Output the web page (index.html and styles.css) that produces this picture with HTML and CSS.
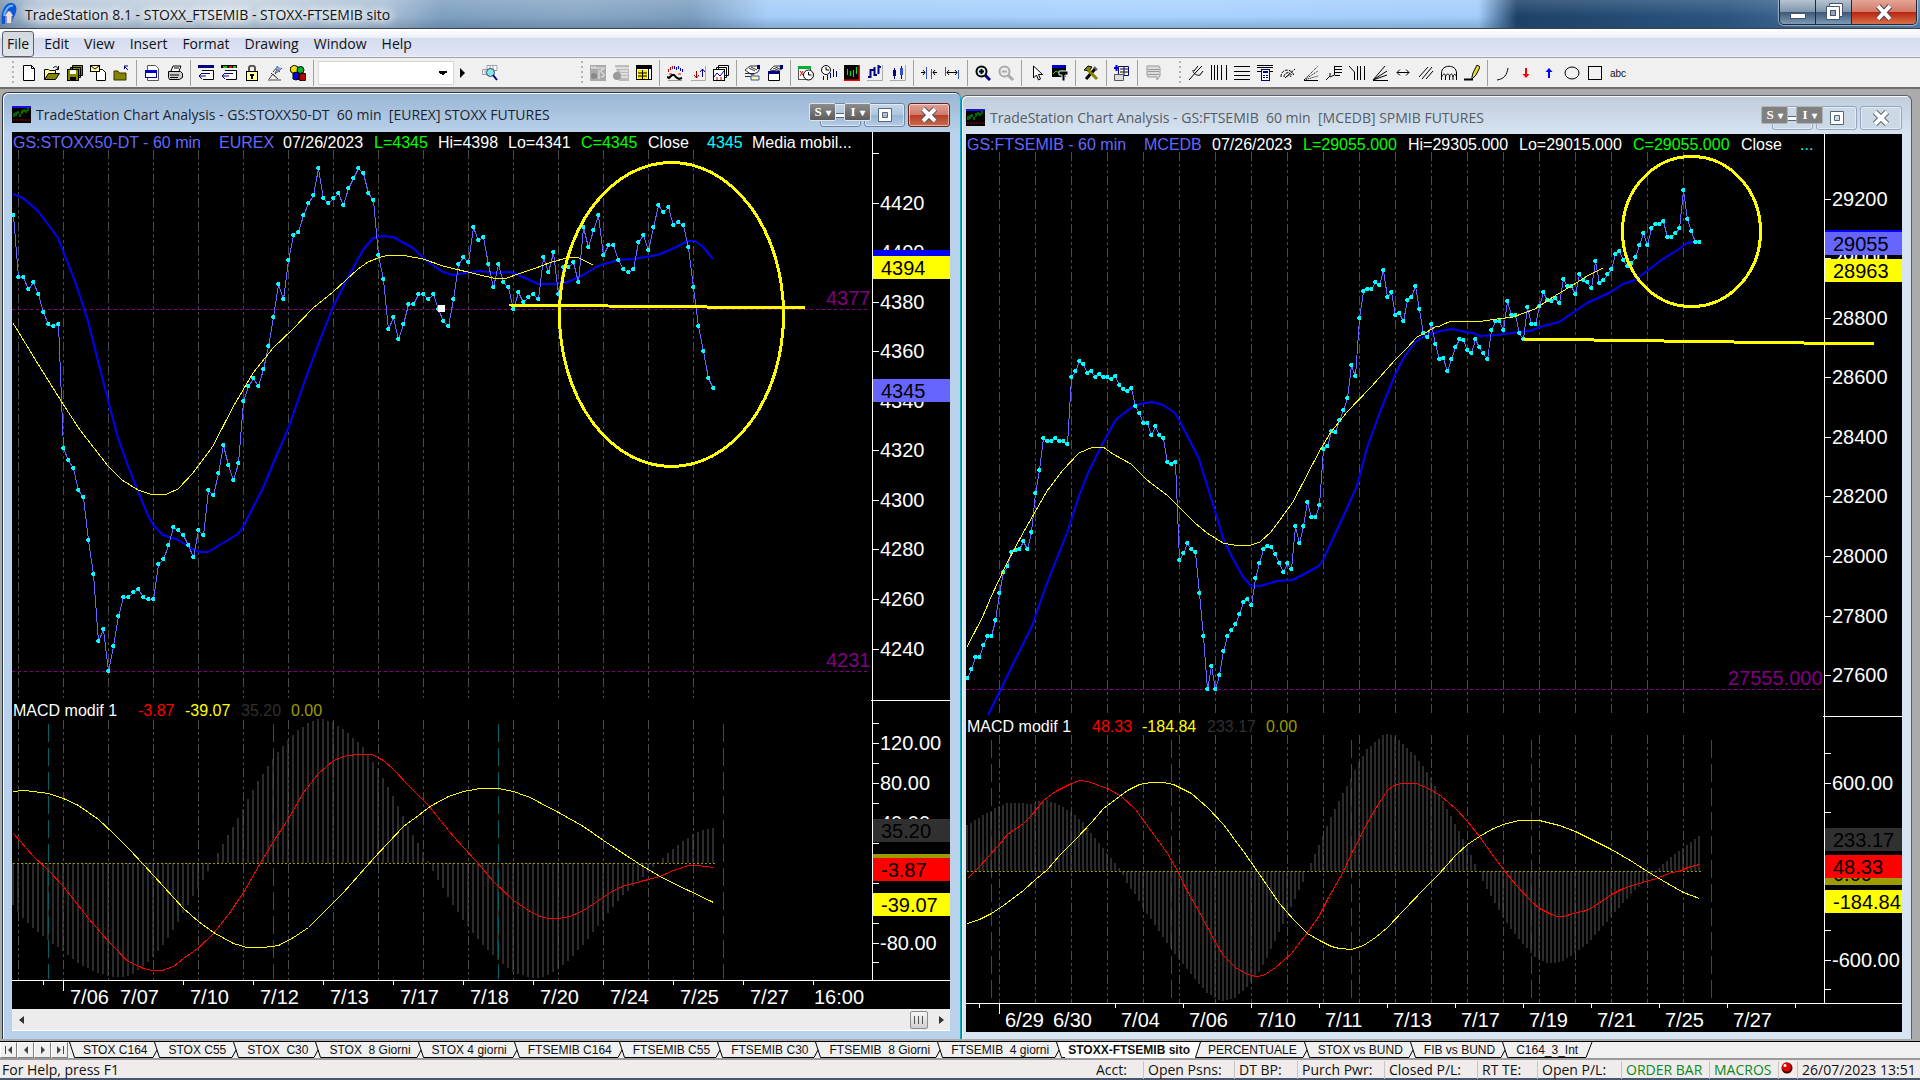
FILE: index.html
```html
<!DOCTYPE html>
<html lang="en">
<head>
  <meta charset="UTF-8" />
  <meta name="viewport" content="width=device-width, initial-scale=1.0" />
  <title>TradeStation 8.1 - STOXX_FTSEMIB - STOXX-FTSEMIB sito</title>
  <link rel="stylesheet" href="styles.css">
</head>
<body>
  <header class="title-bar">
    <svg class="app-logo" viewBox="0 0 16 24">
      <path d="M1 22 C-1 12 3 1 10 1 C16 1 17 8 13 15 L11 20 C12 12 11 9 8 9 C5 9 4 13 4 22 Z" fill="#0a55d8"/>
      <path d="M3 14 C4 7 8 3 12 4" fill="none" stroke="#6cb4ff" stroke-width="2"/>
      <path d="M6 21 V14 H4 L8 9 L12 14 H10 V21 Z" fill="#f4dcd4"/>
    </svg>
    <h1 class="app-title">TradeStation 8.1 - STOXX_FTSEMIB - STOXX-FTSEMIB sito</h1>
    <div class="app-controls">
      <button class="app-btn" aria-label="Minimize"><svg viewBox="0 0 20 20"><rect x="2.500" y="11.500" width="15" height="5" fill="#fff" stroke="#45546a"/></svg></button>
      <button class="app-btn" aria-label="Restore"><svg viewBox="0 0 20 20"><path d="M5.500 1.500h13v13h-3v3h-13v-13h3z" fill="#fff" stroke="#45546a"/><path d="M5.500 4.500h10v10" fill="none" stroke="#45546a"/><rect x="6.500" y="8.500" width="5" height="5" fill="#8ea6c0" stroke="#45546a"/></svg></button>
      <button class="app-btn app-close" aria-label="Close"><svg viewBox="0 0 20 20"><path d="M4 4 L16 17 M16 4 L4 17" stroke="#5a4650" stroke-width="6"/><path d="M4 4 L16 17 M16 4 L4 17" stroke="#fff" stroke-width="4"/></svg></button>
    </div>
  </header>

  <nav class="menu-bar">
    <button class="menu-item active">File</button>
    <button class="menu-item">Edit</button>
    <button class="menu-item">View</button>
    <button class="menu-item">Insert</button>
    <button class="menu-item">Format</button>
    <button class="menu-item">Drawing</button>
    <button class="menu-item">Window</button>
    <button class="menu-item">Help</button>
  </nav>

  <div class="toolbar">
    <div class="tool-group group-file">
      <span class="grip"></span>
      <button class="tool" aria-label="New"><svg viewBox="0 0 16 16"><path d="M2.500.5h8l3 3v12h-11z" fill="#fff" stroke="#000"/><path d="M10.500.5v3h3" fill="none" stroke="#000"/></svg></button>
      <button class="tool" aria-label="Open"><svg viewBox="0 0 16 16"><path d="M.5 14.500v-10h4l1 1h6v3" fill="#ffff9c" stroke="#000"/><path d="M.5 14.500l4-6h11l-4 6z" fill="#848400" stroke="#000"/><path d="M9 3c2-2 4-2 5 1M14.500 1v3.500h-3" fill="none" stroke="#000"/></svg></button>
      <button class="tool" aria-label="Save all"><svg viewBox="0 0 16 16"><path d="M5.500.5h10v10h-10zM3.500 2.500h10v10h-10z" fill="#848400" stroke="#000"/><rect x=".5" y="4.500" width="11" height="11" fill="#848400" stroke="#000"/><path d="M3 5h6v4H3z" fill="#fff"/><path d="M3 12h6v3H3z" fill="#000"/></svg></button>
      <button class="tool" aria-label="Mail"><svg viewBox="0 0 16 16"><path d="M6.500 4.500h6l3 3v8h-9z" fill="#fff" stroke="#000"/><rect x=".5" y=".5" width="9" height="6" fill="#ffffa0" stroke="#000"/><path d="M1 1l4 3 4-3" fill="none" stroke="#000"/></svg></button>
      <button class="tool" aria-label="Close folder"><svg viewBox="0 0 16 16"><path d="M1 6h4l1 2h7v7H1z" fill="#848400" stroke="#333300"/><path d="M11 1h4M11.500 1v3M12 2l3 3" stroke="#000084" fill="none"/></svg></button>
      <span class="sep"></span>
      <button class="tool" aria-label="Page setup"><svg viewBox="0 0 16 16"><path d="M3.500.5h8l3 3v12h-11z" fill="#fff" stroke="#555"/><rect x="1.500" y="5.500" width="11" height="7" fill="#fff" stroke="#0000a0"/><path d="M1 5h12v3H1z" fill="#0000c8"/></svg></button>
      <button class="tool" aria-label="Print"><svg viewBox="0 0 16 16"><path d="M4 6l2-5h8l-2 5" fill="#fff" stroke="#000"/><path d="M1.500 6.500h12l2 2v4l-3 2h-10l-1-2z" fill="#ccc" stroke="#000"/><path d="M3 10h9M3 12.500h8M7 3h5" stroke="#000"/></svg></button>
      <span class="sep"></span>
      <button class="tool" aria-label="Insert analysis"><svg viewBox="0 0 16 16"><path d="M0 0h16v3H0z" fill="#000084"/><path d="M4 5.500h11.500v9H5" fill="#fff" stroke="#000"/><path d="M4 8.500h8M1 11h7M4 8l-3 3 3 3" fill="none" stroke="#000084"/></svg></button>
      <button class="tool" aria-label="Insert strategy"><svg viewBox="0 0 16 16"><path d="M0 0h16v3H0z" fill="#000"/><path d="M2 1h4v2H2z" fill="#0c0"/><path d="M8 1h3v2H8z" fill="#e00"/><path d="M12 1h3v2h-3z" fill="#0c0"/><path d="M4 5.500h11.500v9H5" fill="#fff" stroke="#000"/><path d="M4 8.500h8M1 11h7M4 8l-3 3 3 3" fill="none" stroke="#000084"/></svg></button>
      <button class="tool" aria-label="Lock"><svg viewBox="0 0 16 16"><path d="M5 7V3c0-3 6-3 6 0v4" fill="none" stroke="#555" stroke-width="2"/><rect x="2.500" y="6.500" width="11" height="9" fill="#ffffa0" stroke="#000"/><path d="M6 9h4v2H9v3H7v-3H6z" fill="#000"/></svg></button>
      <button class="tool" aria-label="Satellite"><svg viewBox="0 0 16 16"><path d="M1 15h13M2 14l4-5 5 5M4 8l7 6M6 7l5-6M8 9l7-6M9 4l4 3M8 8l3-5" fill="none" stroke="#444"/><path d="M9 1l5 2-4 4z" fill="#7a9ae8"/></svg></button>
      <button class="tool" aria-label="Objects"><svg viewBox="0 0 16 16"><path d="M0 3l4-3 4 2v5l-4 2-3-2z" fill="#e8e000" stroke="#000"/><circle cx="10.500" cy="5" r="3.500" fill="#00b030" stroke="#000"/><path d="M3 8l4-1 2 1v6l-3 1-3-1z" fill="#0000e0" stroke="#000"/><path d="M9 9l4-1 3 1v6l-3 1-4-1z" fill="#b00000" stroke="#000"/></svg></button>
      <span class="sep"></span>
      <select class="symbol-box" aria-label="Symbol"><option></option></select>
      <button class="play" aria-label="Go"><svg viewBox="0 0 6 10"><path d="M0 0l5 5-5 5z" fill="#000"/></svg></button>
      <button class="tool" aria-label="Symbol lookup"><svg viewBox="0 0 16 16"><path d="M5 .5h10v5H5zM.5 4.500h9v5h-9zM8 1v4M11 1v4M3 5v4" fill="#fff" stroke="#9aa0b0"/><circle cx="8.500" cy="7.500" r="4" fill="#7fe8f0" stroke="#444"/><path d="M11 10l4 5" stroke="#000084" stroke-width="2"/></svg></button>
    </div>

    <div class="tool-group group-chart">
      <span class="grip"></span>
      <button class="tool" aria-label="Trade bar"><svg viewBox="0 0 16 16"><path d="M0 0h16v16H0z" fill="#aaa"/><path d="M1 3h14M2 1v2M5 1v2M14 4l-3 1v2l3 2v2l-3 1M9 5v9" stroke="#eee" fill="none"/><circle cx="4" cy="11" r="3" fill="#888"/></svg></button>
      <button class="tool" aria-label="Order grid"><svg viewBox="0 0 16 16"><path d="M2 0h14v16H6z" fill="#bbb"/><path d="M3 3h13M7 6h8M7 9h8M7 12h8" stroke="#fff"/><circle cx="4" cy="11" r="4" fill="#999"/></svg></button>
      <button class="tool" aria-label="Data window"><svg viewBox="0 0 16 16"><rect x=".5" y=".5" width="15" height="14" fill="#fff" stroke="#000"/><path d="M0 0h16v4H0z" fill="#000"/><rect x="2" y="5" width="9" height="9" fill="#ffe900"/><path d="M2 8h9M2 11h9M6.500 5v9M12.500 4v11" stroke="#000"/></svg></button>
      <span class="sep"></span>
      <button class="tool" aria-label="Analysis techniques"><svg viewBox="0 0 16 16"><path d="M1.500 7V4M3.500 5V2M5.500 4V1" stroke="#d00"/><path d="M7.500 4V1M9.500 5V2M11.500 4V1M13.500 6V3M15.500 7V4" stroke="#00c"/><path d="M0 12l2 1 3-3h2l3 3 2 1 3-1" fill="none" stroke="#000" stroke-width="2"/><path d="M2 9h3M11 9h3" stroke="#d00"/><path d="M1 15.500h14" stroke="#999"/></svg></button>
      <button class="tool" aria-label="Strategies"><svg viewBox="0 0 16 16"><path d="M1 15.500h14.500V1" fill="none" stroke="#aaa"/><path d="M6.500 6v7M4 10l2.500 3L9 10" fill="none" stroke="#900"/><path d="M12.500 12V4M10 7l2.500-3L15 7" fill="none" stroke="#000084"/></svg></button>
      <button class="tool" aria-label="Chart windows"><svg viewBox="0 0 16 16"><path d="M5.500.5h10v10h-10zM3.500 2.500h10v10h-10z" fill="#fff" stroke="#000"/><rect x=".5" y="4.500" width="11" height="11" fill="#fff" stroke="#000"/><path d="M1 12l3-4 3 3 4-5" fill="none" stroke="#00c"/><path d="M4 15v-3M8 15v-3" stroke="#c00"/></svg></button>
      <span class="sep"></span>
      <button class="tool" aria-label="Format symbol"><svg viewBox="0 0 16 16"><path d="M1 5l5-4h7l3 2-2 4-6 3z" fill="#fff" stroke="#333"/><path d="M1 8.500h9M1 11.500h9M5 3l6 3M7 2l6 3" stroke="#333"/><path d="M7 11h8v4H7z" fill="#ffffa0" stroke="#3050b0"/><path d="M13 0h3v4h-3z" fill="#000084"/></svg></button>
      <button class="tool" aria-label="Format window"><svg viewBox="0 0 16 16"><path d="M1.500 6.500h11v9h-11z" fill="#fff" stroke="#000"/><path d="M1 6h12v3H1z" fill="#000084"/><path d="M3 5l4-4h6l2 3-5 2z" fill="#fff" stroke="#333"/><path d="M6 4l5-2M8 5l5-2" stroke="#333"/><path d="M13 0h3v4h-3z" fill="#000084"/></svg></button>
      <span class="sep"></span>
      <button class="tool" aria-label="Interval"><svg viewBox="0 0 16 16"><rect x=".5" y="2.500" width="12" height="12" fill="#fff" stroke="#555"/><path d="M0 1h13v3H0z" fill="#00b030"/><path d="M2 6l3 4M5 6l-3 5" stroke="#d00"/><circle cx="10.500" cy="10" r="5" fill="#fff" stroke="#000"/><path d="M10.500 7v3h3" fill="none" stroke="#000"/></svg></button>
      <button class="tool" aria-label="Session"><svg viewBox="0 0 16 16"><circle cx="5" cy="5" r="4.500" fill="#fff" stroke="#000"/><path d="M5 2v3h3" fill="none" stroke="#000"/><path d="M2.500 11v4M6.500 10v5M9.500 8v5M12.500 4v8M15.500 6v6" stroke="#000084"/></svg></button>
      <button class="tool" aria-label="Chart style"><svg viewBox="0 0 16 16"><path d="M0 0h16v16H0z" fill="#000"/><path d="M15.500 0v15.500H0" fill="none" stroke="#f00" stroke-width="2"/><path d="M3.500 4v6M6.500 6v5M9.500 5v7M12.500 2v7" stroke="#0e0"/></svg></button>
      <button class="tool" aria-label="Bar chart"><svg viewBox="0 0 16 16"><path d="M0 15.500h15.500V0" fill="none" stroke="#aaa"/><path d="M3.500 4v9M1 12h2M4 5h3M7.500 2v9M7 10h3M11.500 0v9M12 2h2" fill="none" stroke="#000084" stroke-width="2"/></svg></button>
      <button class="tool" aria-label="Candlesticks"><svg viewBox="0 0 16 16"><path d="M0 15.500h15.500V0" fill="none" stroke="#aaa"/><path d="M4.500 3v11M11.500 1v13" stroke="#000084"/><path d="M3 5h3v6H3z" fill="#000084"/><path d="M10 3h3v7h-3z" fill="#3050d0"/></svg></button>
      <span class="sep"></span>
      <button class="tool" aria-label="Decrease spacing"><svg viewBox="0 0 16 16"><path d="M5.500 2v12M10.500 4v10" stroke="#3050d0"/><path d="M0 7.500h4M2 5l2 2.500L2 10M16 7.500h-4M14 5l-2 2.500 2 2.500" fill="none" stroke="#000"/></svg></button>
      <button class="tool" aria-label="Increase spacing"><svg viewBox="0 0 16 16"><path d="M1.500 2v9M14.500 5v9" stroke="#3050d0"/><path d="M3 7.500h10M5 5L3 7.500 5 10M11 5l2 2.500L11 10" fill="none" stroke="#000"/></svg></button>
      <span class="sep"></span>
      <button class="tool" aria-label="Zoom in"><svg viewBox="0 0 16 16"><circle cx="6.500" cy="6.500" r="5" fill="#d8f0f0" stroke="#000" stroke-width="2"/><path d="M6.500 4v5M4 6.500h5" stroke="#000" stroke-width="2"/><path d="M10 10l5 5" stroke="#000084" stroke-width="3"/></svg></button>
      <button class="tool" aria-label="Zoom out" disabled><svg viewBox="0 0 16 16"><circle cx="6.500" cy="6.500" r="5" fill="#eee" stroke="#aaa" stroke-width="2"/><path d="M4 6.500h5" stroke="#aaa" stroke-width="2"/><path d="M10 10l5 5" stroke="#aaa" stroke-width="3"/></svg></button>
      <span class="sep"></span>
      <button class="tool" aria-label="Pointer"><svg viewBox="0 0 16 16"><path d="M4.500 1v12l3-3 2 5 2-1-2-4.500h4z" fill="#fff" stroke="#000"/></svg></button>
      <button class="tool" aria-label="Chart text"><svg viewBox="0 0 16 16"><path d="M0 0h14v3H0z" fill="#00c"/><path d="M0 3h14v9H0z" fill="#000"/><path d="M1 9l3-3 3 2 4-3" fill="none" stroke="#0e0"/><path d="M7 6h9v4h-3v6h-3v-6H7z" fill="#000" stroke="#f0f0f0"/></svg></button>
      <span class="sep"></span>
      <button class="tool" aria-label="Customize"><svg viewBox="0 0 16 16"><path d="M3 14L12 4" stroke="#000" stroke-width="3"/><path d="M1 5l4-4 4 1-3 4z" fill="#848400" stroke="#000"/><path d="M5 5l9 9" stroke="#848400" stroke-width="3"/><path d="M11 2l3 3" stroke="#555" stroke-width="2"/></svg></button>
      <span class="sep"></span>
      <button class="tool" aria-label="Add page"><svg viewBox="0 0 16 16"><path d="M4.500 1.500h10v9h-10z" fill="#ffffa0" stroke="#000084"/><path d="M6 4h8M6 7h8M10 2v8" stroke="#000084"/><path d="M2.500 0v6M0 3h5" stroke="#00c" stroke-width="2"/><path d="M.5 9.500h9v6h-9z" fill="#ddd" stroke="#555"/></svg></button>
      <span class="sep"></span>
      <button class="tool" aria-label="Notes" disabled><svg viewBox="0 0 16 16"><path d="M2 1h12l1 2v8l-3 4v-3H3l-1-2z" fill="#ddd" stroke="#999"/><path d="M3 4.500h11M3 6.500h11M3 9.500h11" stroke="#999"/></svg></button>
    </div>

    <div class="tool-group group-draw">
      <span class="grip"></span>
      <button class="tool" aria-label="Pitchfork"><svg viewBox="0 0 16 16"><path d="M1 15l8-9M5 5c0 4 4 6 7 5M6 6l4-5M12 10l3-4M9 6l5-5" fill="none" stroke="#000"/></svg></button>
      <button class="tool" aria-label="Time cycles"><svg viewBox="0 0 16 16"><path d="M.5 0v15M3.500 0v15M6.500 0v15M10.500 0v15M15.500 0v15" stroke="#000"/></svg></button>
      <button class="tool" aria-label="Price lines"><svg viewBox="0 0 16 16"><path d="M0 1.500h16M0 6.500h16M0 10.500h16M0 14.500h16" stroke="#000"/></svg></button>
      <button class="tool" aria-label="Calculator"><svg viewBox="0 0 16 16"><path d="M0 .5h16M0 2.500h16M0 6.500h16" stroke="#000"/><rect x="4.500" y="4.500" width="8" height="11" fill="#fff" stroke="#000084"/><path d="M6 6h5v2H6zM6 10h2v1H6zM9 10h2v1H9zM6 12h2v1H6zM9 12h2v1H9z" fill="#000084"/></svg></button>
      <button class="tool" aria-label="Speed arcs"><svg viewBox="0 0 16 16"><path d="M1 12c0-9 11-9 13-1M4 12c0-5 6-6 8-1M7 12c0-2 3-3 4 0M5 13L15 4" fill="none" stroke="#000" stroke-dasharray="3 1"/></svg></button>
      <button class="tool" aria-label="Speed fan"><svg viewBox="0 0 16 16"><path d="M1 15L15 1M1 15l14-9M1 15l14-4" fill="none" stroke="#000" stroke-dasharray="1 1"/><path d="M1 15.500h14" stroke="#000"/></svg></button>
      <button class="tool" aria-label="Retracement"><svg viewBox="0 0 16 16"><path d="M0 15l4-4v-3M4 12l4.500-2V1M9 1.500h7M9 4.500h7M9 7.500h7M9 10.500h5" fill="none" stroke="#000"/></svg></button>
      <button class="tool" aria-label="Time ratio"><svg viewBox="0 0 16 16"><path d="M0 1l5.500 6V15M8.500 1v14M11.500 1v14M15.500 1v14" fill="none" stroke="#000"/></svg></button>
      <button class="tool" aria-label="Gann fan"><svg viewBox="0 0 16 16"><path d="M1 15L13 1M1 15l14-9M1 15l14-5M1 15.500h15" fill="none" stroke="#000"/></svg></button>
      <button class="tool" aria-label="Horizontal arrow"><svg viewBox="0 0 16 16"><path d="M2 7.500h12M5 4.500l-3 3 3 3M11 4.500l3 3-3 3" fill="none" stroke="#000"/></svg></button>
      <button class="tool" aria-label="Parallel lines"><svg viewBox="0 0 16 16"><path d="M1 12l9-10M4 14L14 2M8 14l7-8" fill="none" stroke="#000"/></svg></button>
      <button class="tool" aria-label="Cycle arcs"><svg viewBox="0 0 16 16"><path d="M.5 15V8c0-9 15-9 15 0v7M.5 12c2-4 4-4 4 0 1-4 4-4 4 0 1-4 3-4 3.500 0 1-4 3-3 3.500 0M4.500 12v3M8.500 12v3M12 12v3" fill="none" stroke="#000"/></svg></button>
      <button class="tool" aria-label="Pencil"><svg viewBox="0 0 16 16"><path d="M0 14.500h9" stroke="#000" stroke-width="2"/><path d="M8 12l1-4 4-8 3 2-4 8-4 4z" fill="#e8e040" stroke="#000"/></svg></button>
      <span class="sep"></span>
      <button class="tool" aria-label="Arc"><svg viewBox="0 0 16 16"><path d="M2 15c7-1 10-5 11-12" fill="none" stroke="#000"/></svg></button>
      <button class="tool" aria-label="Down arrow"><svg viewBox="0 0 16 16"><path d="M7 3h2v6h2.500L8 13 4.500 9H7z" fill="#f00"/></svg></button>
      <button class="tool" aria-label="Up arrow"><svg viewBox="0 0 16 16"><path d="M7 13h2V7h2.500L8 3 4.500 7H7z" fill="#00f"/></svg></button>
      <button class="tool" aria-label="Ellipse"><svg viewBox="0 0 16 16"><ellipse cx="8" cy="8" rx="7" ry="6" fill="none" stroke="#000"/></svg></button>
      <button class="tool" aria-label="Rectangle"><svg viewBox="0 0 16 16"><rect x="1.500" y="1.500" width="13" height="13" fill="none" stroke="#000"/></svg></button>
      <button class="tool tool-text">abc</button>
    </div>
  </div>

  <main class="workspace">
    <section class="window window-stoxx">
      <div class="window-bar">
        <svg class="chart-logo" viewBox="0 0 19 17"><path d="M0 0h19v17H0z"/><path d="M0 0h19v2H0z" fill="#1414e0"/><path d="M2 11V7M4 10V6M6 8V5M8 11V8M10 8V4M12 6V3M14 7V4M16 5V2" stroke="#0c0"/><path d="M1 14h17" stroke="#a00000" stroke-dasharray="2 1"/></svg>
        <h2 class="window-title">TradeStation Chart Analysis - GS:STOXX50-DT&nbsp; 60 min&nbsp; [EUREX] STOXX FUTURES</h2>
        <div class="window-controls">
          <button class="win-btn" aria-label="Minimize"><svg viewBox="0 0 16 16"><rect x="1.500" y="6.500" width="12" height="4" fill="#fff" stroke="#54657c"/></svg></button>
          <button class="win-btn" aria-label="Maximize"><svg viewBox="0 0 16 16"><path d="M1.500 1.500h13v13h-13zM5.500 5.500v5h5v-5z" fill="#fff" stroke="#54657c"/></svg></button>
          <button class="win-btn win-close" aria-label="Close"><svg viewBox="0 0 16 16"><path d="M2 2l12 12M14 2L2 14" stroke="#54505c" stroke-width="6"/><path d="M2 2l12 12M14 2L2 14" stroke="#fff" stroke-width="4"/></svg></button>
          <button class="link-btn link-symbol">S<small>▾</small></button>
          <button class="link-btn link-interval">I<small>▾</small></button>
        </div>
      </div>
      <svg class="chart" id="chart-stoxx" viewBox="12 132 938 877"></svg>
      <div class="scroll-bar">
        <button class="scroll-arrow" aria-label="Scroll left"><svg viewBox="0 0 5 8"><path d="M5 0v8L0 4z"/></svg></button>
        <button class="scroll-thumb" aria-label="Scroll position"></button>
        <button class="scroll-arrow" aria-label="Scroll right"><svg viewBox="0 0 5 8"><path d="M0 0v8l5-4z"/></svg></button>
      </div>
    </section>

    <section class="window window-mib">
      <div class="window-bar">
        <svg class="chart-logo" viewBox="0 0 19 17"><path d="M0 0h19v17H0z"/><path d="M0 0h19v2H0z" fill="#1414e0"/><path d="M2 11V7M4 10V6M6 8V5M8 11V8M10 8V4M12 6V3M14 7V4M16 5V2" stroke="#0c0"/><path d="M1 14h17" stroke="#a00000" stroke-dasharray="2 1"/></svg>
        <h2 class="window-title">TradeStation Chart Analysis - GS:FTSEMIB&nbsp; 60 min&nbsp; [MCEDB] SPMIB FUTURES</h2>
        <div class="window-controls">
          <button class="win-btn" aria-label="Minimize"><svg viewBox="0 0 16 16"><rect x="1.500" y="6.500" width="12" height="4" fill="#fff" stroke="#54657c"/></svg></button>
          <button class="win-btn" aria-label="Maximize"><svg viewBox="0 0 16 16"><path d="M1.500 1.500h13v13h-13zM5.500 5.500v5h5v-5z" fill="#fff" stroke="#54657c"/></svg></button>
          <button class="win-btn win-close" aria-label="Close"><svg viewBox="0 0 16 16"><path d="M2 2l12 12M14 2L2 14" stroke="#54606c" stroke-width="6"/><path d="M2 2l12 12M14 2L2 14" stroke="#fff" stroke-width="4"/></svg></button>
          <button class="link-btn link-symbol">S<small>▾</small></button>
          <button class="link-btn link-interval">I<small>▾</small></button>
        </div>
      </div>
      <svg class="chart" id="chart-mib" viewBox="966 134 936 898"></svg>
    </section>
  </main>

  <div class="tab-bar" id="tab-bar">
    <button class="tab-nav" aria-label="First tab"><svg viewBox="0 0 8 8"><path d="M0 0h1v8H0zM7 0v8L3 4z"/></svg></button>
    <button class="tab-nav" aria-label="Previous tab"><svg viewBox="0 0 8 8"><path d="M6 0v8L2 4z"/></svg></button>
    <button class="tab-nav" aria-label="Next tab"><svg viewBox="0 0 8 8"><path d="M2 0v8l4-4z"/></svg></button>
    <button class="tab-nav" aria-label="Last tab"><svg viewBox="0 0 8 8"><path d="M7 0h1v8H7zM1 0v8l4-4z"/></svg></button>
  </div>

  <footer class="status-bar">
    <span>For Help, press F1</span>
    <span>Acct:</span>
    <span class="cell">Open Psns:</span>
    <span class="cell">DT BP:</span>
    <span class="cell">Purch Pwr:</span>
    <span class="cell">Closed P/L:</span>
    <span class="cell">RT TE:</span>
    <span class="cell">Open P/L:</span>
    <span class="cell green">ORDER BAR</span>
    <span class="cell green">MACROS</span>
    <span class="cell lamp"><svg viewBox="0 0 12 12"><circle cx="6" cy="6" r="5.500" fill="#4a0000"/><circle cx="5.500" cy="5" r="4.500" fill="#e00000"/><circle cx="4" cy="3.500" r="1.500" fill="#fff"/></svg></span>
    <span class="cell">26/07/2023 13:51</span>
  </footer>

  <script src="charts.js"></script>
</body>
</html>
```

FILE: styles.css
```css
* {
  box-sizing: border-box;
}

html, body {
  margin: 0;
  height: 100%;
}

body {
  display: flex;
  flex-direction: column;
  font-family: "Open Sans", "Noto Sans", sans-serif;
  font-size: 14px;
  color: #111;
  background: #f0f0f0;
  overflow: hidden;
}

button {
  font: inherit;
  color: inherit;
  margin: 0;
  padding: 0;
  border: none;
  background: none;
}

h1, h2 {
  margin: 0;
  font-size: 14px;
  font-weight: 400;
  white-space: nowrap;
}

/* application title bar */
.title-bar {
  flex: none;
  height: 29px;
  display: flex;
  align-items: center;
  border-bottom: 1px solid #3c4450;
  background:
    linear-gradient(to bottom, rgba(255, 255, 255, 0.15), rgba(255, 255, 255, 0) 60%, rgba(40, 70, 100, 0.25)),
    linear-gradient(to right, #7b94ad 0, #b3c5d8 2%, #c6d3e1 12%, #a9bfd6 20%, #7d9fc0 23%, #87a6c4 30%, #7b9dbf 36%, #a5cdf8 40%, #a8d2ff 60%, #a2cdfb 77%, #1c4168 79%, #2b5580 90%, #5c86b0 100%);
}

.app-logo {
  width: 16px;
  height: 24px;
  margin-left: 1px;
}

.app-title {
  flex: 1;
  padding-left: 8px;
  text-shadow: 0 0 8px #fff, 0 0 8px #fff, 0 0 12px #fff;
}

.app-controls {
  align-self: flex-start;
  display: flex;
  height: 25px;
  margin-right: 3px;
  border: 1px solid #1c2a3c;
  border-top: none;
  border-radius: 0 0 5px 5px;
  overflow: hidden;
  box-shadow: 0 0 1px 1px rgba(255, 255, 255, 0.5);
}

.app-btn {
  width: 36px;
  border-right: 1px solid #1c2a3c;
  background: linear-gradient(#b6c3d2, #8296ad 48%, #3d5874 50%, #7f9ab6);
}

.app-btn svg {
  display: block;
  width: 20px;
  height: 20px;
  margin: 0 auto;
}

.app-close {
  width: 64px;
  border-right: none;
  background: linear-gradient(#e6a596, #d07a68 48%, #b8220c 50%, #d8704a);
}

/* menu */
.menu-bar {
  flex: none;
  height: 29px;
  display: flex;
  align-items: center;
  gap: 1px;
  padding: 1px 2px 0;
  border-bottom: 1px solid #a0a0a4;
  background: linear-gradient(#fff, #eef0f8 30%, #d5dcee 32%, #dfe5f5 95%, #f8f8f8);
}

.menu-item {
  height: 26px;
  padding: 0 6px;
  border: 1px solid transparent;
  line-height: 23px;
}

.menu-item.active {
  margin-right: 2px;
  padding: 0 4px;
  border-color: #5c6066;
  border-radius: 3px;
  background: linear-gradient(#d4d8de, #dfe5ea);
}

/* toolbars */
.toolbar {
  flex: none;
  height: 31px;
  display: flex;
  padding: 1px 0 0 8px;
  border-bottom: 2px solid #6e6e6e;
  background: #f0f0f0;
}

.tool-group {
  display: flex;
  align-items: center;
}

.group-file {
  flex: 0 0 569px;
}

.group-chart {
  flex: 0 0 598px;
}

.grip {
  width: 2px;
  height: 25px;
  margin: 0 4px;
  background: repeating-linear-gradient(#b4b4b4 0 2px, transparent 2px 5px);
}

.sep {
  width: 1px;
  height: 26px;
  margin: 0 4px 0 3px;
  background: #a0a0a0;
}

.tool {
  flex: none;
  width: 23px;
  height: 22px;
  padding: 0 4px 0 3px;
}

.tool svg {
  display: block;
  width: 16px;
  height: 16px;
}

.tool-text {
  font-family: "Liberation Sans", Arial, sans-serif;
  font-size: 10px;
}

.symbol-box {
  width: 136px;
  height: 24px;
  padding: 0;
  border: 1px solid #d8d8d8;
  border-radius: 0;
  appearance: none;
  background:
    linear-gradient(45deg, transparent 50%, #000 50%) 119px 9px / 5px 5px no-repeat,
    linear-gradient(-45deg, transparent 50%, #000 50%) 124px 9px / 5px 5px no-repeat,
    #fff;
}

.play {
  width: 6px;
  margin: 0 13px 0 6px;
}

.play svg {
  display: block;
  width: 6px;
  height: 10px;
}

/* MDI area */
.workspace {
  flex: 1;
  min-height: 0;
  display: grid;
  grid-template-columns: 959fr 951fr;
  padding: 3px 8px 2px 2px;
  background: #ababab;
}

.window {
  min-width: 0;
  min-height: 0;
  display: flex;
  flex-direction: column;
  border: 1px solid #2e3a48;
  border-bottom: none;
  border-radius: 6px 6px 0 0;
}

.window-stoxx {
  padding: 0 10px 8px 9px;
  border-right-color: #10a8c8;
  background: linear-gradient(#9ab6d4 0, #b9d1ea 40px, #b9d1ea);
  box-shadow: inset 1px 1px 0 #f4f8fc;
}

.window-mib {
  margin-top: 3px;
  padding: 0 9px 7px 4px;
  border-color: #58606a;
  background: linear-gradient(#c0ccd9 0, #d7e4f2 39px, #d7e4f2);
  box-shadow: inset 1px 1px 0 #f4f8fc;
}

.window-bar {
  flex: none;
  display: flex;
  align-items: center;
  height: 39px;
  padding: 8px 0 4px;
}

.window-mib .window-bar {
  height: 38px;
}

.chart-logo {
  width: 19px;
  height: 17px;
  margin-right: 5px;
}

.window-title {
  flex: 1;
  color: #1c2430;
}

.window-mib .window-title {
  color: #565c64;
}

.window-controls {
  position: relative;
  align-self: flex-start;
  display: flex;
  gap: 3px;
  margin-top: 2px;
}

.win-btn {
  width: 41px;
  height: 24px;
  border: 1px solid #7286a4;
  border-radius: 3px;
  background: linear-gradient(#c4d6ea, #afc6e0 48%, #98b4d2 50%, #b4cce6);
  box-shadow: inset 0 0 0 1px rgba(255, 255, 255, 0.5);
}

.win-btn svg {
  display: block;
  width: 16px;
  height: 16px;
  margin: 0 auto;
}

.win-close {
  width: 42px;
  border-color: #6a2418;
  background: linear-gradient(#e2a298, #cf7a6c 48%, #b83c26 50%, #c86a50);
}

.window-mib .win-btn {
  border-color: #93a4bc;
  background: #cbd8e6;
}

/* symbol / interval link buttons lie over the caption buttons */
.link-btn {
  position: absolute;
  top: 0;
  width: 27px;
  height: 18px;
  border: 1px solid #e0e4e8;
  border-radius: 2px;
  background: linear-gradient(#8c8c8c, #5c5c5c);
  color: #fff;
  font: bold 13px/14px "Liberation Serif", serif;
}

.window-mib .link-btn {
  border-color: #b0b4b8;
  background: #808080;
}

.link-btn small {
  margin-left: 4px;
  font-size: 10px;
}

.link-symbol {
  left: -11px;
}

.link-interval {
  left: 24px;
}

/* charts */
.chart {
  flex: 1;
  min-height: 0;
  width: 100%;
  display: block;
  background: #000;
  font-family: "Liberation Sans", Arial, sans-serif;
}

.axis-label {
  font-size: 20px;
  fill: #fff;
}

.level-label {
  font-size: 20px;
  fill: #800080;
}

.tag-label {
  font-size: 20px;
  fill: #000;
}

.legend {
  font-size: 16px;
  fill: #fff;
}

.scroll-bar {
  flex: none;
  display: flex;
  align-items: center;
  height: 22px;
  border-bottom: 1px solid #fff;
  background: #ececec;
}

.scroll-arrow {
  width: 18px;
  height: 20px;
}

.scroll-arrow svg {
  display: block;
  width: 5px;
  height: 8px;
  margin: 0 auto;
  fill: #333;
}

.scroll-thumb {
  width: 18px;
  height: 18px;
  margin: 0 4px 0 auto;
  border: 1px solid #8c8c8c;
  border-radius: 2px;
  background:
    repeating-linear-gradient(to right, #555 0 1px, transparent 1px 4px) 3px 4px / 10px 8px no-repeat,
    linear-gradient(#f6f6f6, #d0d0d0);
}

/* workspace tabs */
.tab-bar {
  flex: none;
  display: flex;
  height: 19px;
  border-top: 1px solid #000;
  border-bottom: 2px solid #9a9a9a;
  background: #f0f0f0;
}

.tab-nav {
  width: 17px;
  height: 16px;
  border: 1px solid #fff;
  border-right-color: #808080;
  border-bottom-color: #808080;
}

.tab-nav svg {
  display: block;
  width: 8px;
  height: 8px;
  margin: 0 auto;
  fill: #444;
}

.tab {
  height: 16px;
  padding: 0 6px 0 5px;
  border-bottom: 1px solid #000;
  font-family: "Liberation Sans", Arial, sans-serif;
  font-size: 12px;
  line-height: 16px;
  white-space: pre;
}

.tab.active {
  padding: 0 3px;
  background: #fff;
  border-bottom-color: #fff;
  font-weight: 700;
}

.slant {
  width: 10px;
  height: 16px;
}

/* status bar */
.status-bar {
  flex: none;
  display: grid;
  grid-template-columns: 1fr 47px 91px 63px 87px 93px 60px 84px 88px 69px 19px 123px;
  align-items: center;
  height: 20px;
  padding-left: 2px;
  border-bottom: 2px solid #46566e;
  background: #f0ecec;
  white-space: nowrap;
}

.cell {
  padding-left: 4px;
  border-left: 1px solid #c8c4c4;
  line-height: 18px;
}

.green {
  color: #0a8a1a;
}

.lamp {
  padding-left: 2px;
  height: 18px;
}

.lamp svg {
  display: block;
  width: 12px;
  height: 12px;
  margin-top: 1px;
}
```

FILE: charts.js
```js
const TABS = ['STOX C164', 'STOX C55', 'STOX  C30', 'STOX  8 Giorni', 'STOX 4 giorni',
  'FTSEMIB C164', 'FTSEMIB C55', 'FTSEMIB C30', 'FTSEMIB  8 Giorni', 'FTSEMIB  4 giorni',
  'STOXX-FTSEMIB sito', 'PERCENTUALE', 'STOX vs BUND', 'FIB vs BUND', 'C164_3_Int'];
const ACTIVE_TAB = 10;

const WHITE = '#ffffff';
const BLUE = '#6666ff';
const GREEN = '#00ff00';
const CYAN = '#00ffff';
const RED = '#ff0000';
const YELLOW = '#ffff00';
const OLIVE = '#9c9c00';
const GRAY = '#303030';

const stoxx = {
  id: 'chart-stoxx',
  left: 12, right: 950, top: 132, split: 700, bottom: 980, axis: 872,
  first: 13, step: 5,
  gridFirst: 18, gridStep: 45, gridCount: 16, gridTop: 150, gridEnd: 698, macdTop: 720,
  legendY: 148, macdLegendY: 716,
  priceY: p => 202.5 + (4420 - p) * 2.4785,
  legend: [[13, 'GS:STOXX50-DT - 60 min', BLUE], [219, 'EUREX', BLUE], [283, '07/26/2023', WHITE], [374, 'L=4345', GREEN],
    [438, 'Hi=4398', WHITE], [508, 'Lo=4341', WHITE], [581, 'C=4345', GREEN], [648, 'Close', WHITE], [707, '4345', CYAN],
    [752, 'Media mobil...', WHITE]],
  macdLegend: [[13, 'MACD modif 1', WHITE], [138, '-3.87', RED], [185, '-39.07', YELLOW], [241, '35.20', GRAY], [291, '0.00', OLIVE]],
  ticks: [4440, 4420, 4400, 4380, 4360, 4340, 4320, 4300, 4280, 4260, 4240],
  labels: [4420, 4400, 4380, 4360, 4340, 4320, 4300, 4280, 4260, 4240],
  tags: [[250, 23, '#0000ff', ''], [256, 23, YELLOW, '4394'], [379, 23, BLUE, '4345']],
  levels: [[309, 826, 305, '4377'], [671, 826, 667, '4231']],
  macdTicks: [723, 743, 763, 783, 803, 823, 843, 863, 883, 903, 923, 943, 962],
  macdLabels: [[743, '120.00'], [783, '80.00'], [823, '40.00'], [943, '-80.00']],
  macdTags: [[854, 23, OLIVE, '0.00'], [819, 23, GRAY, '35.20'], [858, 23, RED, '-3.87'], [893, 23, YELLOW, '-39.07']],
  dateTicks: [43, 183, 253, 323, 393, 463, 533, 603, 673, 743, 813],
  yearTick: 63, dateY: 1004,
  dates: [[70, '7/06'], [120, '7/07'], [190, '7/10'], [260, '7/12'], [330, '7/13'], [400, '7/17'], [470, '7/18'],
    [540, '7/20'], [610, '7/24'], [680, '7/25'], [750, '7/27'], [814, '16:00']],
  price: [4415, 4390, 4390, 4385, 4388, 4383, 4376, 4371, 4370, 4371, 4321, 4316, 4313, 4304, 4301, 4284, 4270, 4243, 4248,
    4231, 4241, 4253, 4261, 4261, 4263, 4264, 4261, 4260, 4260, 4274, 4276, 4282, 4289, 4288, 4286, 4282, 4277, 4288, 4286,
    4304, 4302, 4311, 4322, 4314, 4308, 4315, 4340, 4346, 4349, 4346, 4353, 4362, 4374, 4387, 4381, 4397, 4407, 4408, 4415,
    4420, 4423, 4434, 4422, 4420, 4422, 4424, 4419, 4426, 4430, 4434, 4432, 4424, 4421, 4399, 4389, 4369, 4374, 4365, 4371,
    4379, 4379, 4383, 4383, 4381, 4383, 4377, 4372, 4370, 4381, 4395, 4398, 4396, 4410, 4405, 4406, 4395, 4386, 4395, 4388,
    4386, 4377, 4384, 4380, 4382, 4383, 4381, 4398, 4392, 4400, 4383, 4394, 4394, 4396, 4388, 4410, 4402, 4409, 4415, 4399,
    4403, 4403, 4397, 4393, 4392, 4393, 4404, 4407, 4401, 4410, 4419, 4416, 4418, 4411, 4412, 4411, 4402, 4386, 4370, 4360,
    4349, 4345],
  slow: [[13, 194], [23, 198], [38, 211], [53, 231], [58, 238], [63, 251], [73, 276], [78, 290], [88, 321], [98, 361],
    [108, 400], [118, 438], [128, 466], [138, 491], [147, 513], [153, 525], [163, 535], [178, 540], [193, 549], [200, 552],
    [208, 552], [218, 546], [238, 534], [243, 527], [263, 488], [273, 464], [288, 429], [303, 386], [318, 345], [333, 307],
    [347, 279], [363, 250], [373, 238], [383, 236], [393, 237], [413, 248], [428, 262], [443, 272], [453, 275], [480, 271],
    [493, 273], [510, 272], [523, 277], [538, 284], [558, 284], [568, 282], [583, 275], [598, 266], [618, 260], [633, 259],
    [658, 255], [672, 249], [688, 241], [695, 241], [703, 247], [713, 259]],
  fast: [[13, 323], [38, 364], [63, 404], [80, 430], [108, 466], [122, 480], [138, 490], [150, 494], [167, 494], [178, 489],
    [193, 473], [213, 446], [233, 407], [253, 373], [273, 348], [293, 329], [313, 308], [333, 292], [358, 269], [368, 262],
    [378, 258], [388, 255], [407, 256], [423, 259], [443, 266], [480, 275], [493, 278], [507, 278], [518, 274], [533, 269],
    [552, 262], [567, 258], [577, 257], [593, 265]],
  zero: 863,
  hist: [[0, -42], [2, -55], [4, -65], [7, -77], [10, -88], [13, -100], [16, -108], [19, -113], [21, -114], [22, -114],
    [24, -111], [26, -103], [28, -94], [30, -82], [32, -67], [34, -50], [36, -33], [37, -26], [39, -8], [40, 0], [41, 10],
    [43, 28], [45, 45], [47, 64], [49, 82], [51, 97], [53, 111], [55, 123], [57, 133], [59, 140], [61, 144], [62, 144],
    [64, 141], [67, 130], [70, 116], [73, 94], [76, 67], [79, 37], [82, 11], [83, 2], [84, -8], [87, -34], [90, -57],
    [93, -76], [94, -82], [97, -97], [100, -109], [103, -114], [105, -115], [107, -112], [109, -106], [111, -98], [114, -82],
    [117, -63], [120, -44], [122, -32], [124, -23], [127, -9], [129, 1], [131, 10], [133, 18], [136, 29], [138, 33], [140, 35]],
  signal: [[0, 72], [2, 73], [4, 72], [7, 70], [10, 65], [13, 58], [17, 44], [20, 30], [23, 15], [26, -1], [30, -23],
    [34, -45], [37, -58], [40, -69], [44, -80], [46.7, -84], [50, -84], [53, -82], [56, -74], [59, -64], [62, -49], [66, -29],
    [72, 5], [78, 37], [81, 48], [83.3, 57], [87, 67], [90, 72], [93.3, 75], [97, 75], [100, 72], [103.3, 66], [109, 51],
    [114, 37], [118, 23], [125, 0], [129.3, -13], [133.3, -23], [136.7, -31], [140, -39]],
  macd: [[0, 30], [4, 7], [7, -7], [10, -23], [15, -55], [19, -78], [22.7, -97], [26, -105], [27.7, -107], [29.7, -107],
    [32, -103], [34, -95], [36, -88], [37.3, -83], [40, -70], [43.3, -49], [46, -29], [49, -3], [52, 22], [55, 45], [58, 71],
    [61, 90], [64, 103], [66.7, 108], [69.3, 109], [71.7, 109], [74, 103], [76, 94], [79, 78], [83, 58], [88, 27],
    [93.3, -2], [96, -18], [100, -37], [103, -47], [105.3, -53], [107, -55], [109, -55], [111.3, -53], [114, -47],
    [117, -37], [120, -27], [122.3, -22], [127, -16], [129.3, -13], [132, -7], [135, -2], [137, -2], [140, -4]],
  cycles: [48, 273, 498, 723], cycleTop: 724,
  ellipse: [671.5, 314.5, 112, 152],
  trend: [509, 305, 805, 308],
  marker: [438, 305]
};

const mib = {
  id: 'chart-mib',
  left: 966, right: 1902, top: 134, split: 716, bottom: 1003, axis: 1824,
  first: 967, step: 4,
  gridFirst: 999, gridStep: 36, gridCount: 20, gridTop: 152, gridEnd: 715, macdTop: 735,
  legendY: 150, macdLegendY: 732,
  priceY: p => 198.5 + (29200 - p) * 0.2979,
  legend: [[967, 'GS:FTSEMIB - 60 min', BLUE], [1144, 'MCEDB', BLUE], [1212, '07/26/2023', WHITE], [1303, 'L=29055.000', GREEN],
    [1408, 'Hi=29305.000', WHITE], [1519, 'Lo=29015.000', WHITE], [1633, 'C=29055.000', GREEN], [1741, 'Close', WHITE],
    [1800, '...', CYAN]],
  macdLegend: [[967, 'MACD modif 1', WHITE], [1092, '48.33', RED], [1142, '-184.84', YELLOW], [1207, '233.17', GRAY], [1266, '0.00', OLIVE]],
  ticks: [29200, 29000, 28800, 28600, 28400, 28200, 28000, 27800, 27600],
  labels: [29200, 29000, 28800, 28600, 28400, 28200, 28000, 27800, 27600],
  tags: [[230, 23, '#0000ff', ''], [232, 23, BLUE, '29055'], [259, 23, YELLOW, '28963']],
  levels: [[689, 1728, 685, '27555.000']],
  macdTicks: [753, 783, 812, 842, 901, 930, 960, 989],
  macdLabels: [[783, '600.00'], [960, '-600.00']],
  macdTags: [[862, 23, OLIVE, '0.00'], [828, 23, GRAY, '233.17'], [855, 23, RED, '48.33'], [890, 23, YELLOW, '-184.84']],
  dateTicks: [979, 1115, 1183, 1251, 1319, 1387, 1455, 1523, 1591, 1659, 1727, 1795],
  yearTick: 999, dateY: 1027,
  dates: [[1005, '6/29'], [1053, '6/30'], [1121, '7/04'], [1189, '7/06'], [1257, '7/10'], [1325, '7/11'], [1393, '7/13'],
    [1461, '7/17'], [1529, '7/19'], [1597, '7/21'], [1665, '7/25'], [1733, '7/27']],
  price: [27590, 27620, 27660, 27660, 27700, 27730, 27730, 27785, 27875, 27945, 27965, 28015, 28020, 28025, 28050, 28025,
    28080, 28210, 28290, 28395, 28385, 28385, 28395, 28385, 28385, 28375, 28600, 28620, 28655, 28645, 28615, 28620, 28600,
    28610, 28600, 28600, 28595, 28605, 28575, 28560, 28555, 28565, 28505, 28480, 28445, 28445, 28405, 28435, 28405, 28395,
    28315, 28310, 28315, 27985, 28010, 28045, 28025, 28015, 27875, 27730, 27555, 27630, 27555, 27600, 27680, 27730, 27750,
    27770, 27805, 27845, 27855, 27835, 27925, 27975, 28025, 28035, 28030, 28005, 27975, 27945, 27975, 27955, 28100, 28045,
    28100, 28180, 28130, 28130, 28170, 28360, 28370, 28420, 28415, 28455, 28490, 28530, 28640, 28605, 28800, 28890, 28895,
    28895, 28920, 28910, 28960, 28870, 28885, 28810, 28815, 28790, 28860, 28870, 28905, 28830, 28750, 28735, 28780, 28710,
    28660, 28665, 28620, 28660, 28700, 28730, 28725, 28690, 28680, 28730, 28700, 28680, 28660, 28760, 28790, 28790, 28760,
    28855, 28810, 28810, 28750, 28730, 28835, 28780, 28780, 28840, 28885, 28860, 28855, 28865, 28850, 28930, 28905, 28905,
    28880, 28945, 28925, 28920, 28900, 28990, 28915, 28925, 28945, 28965, 29015, 29025, 28995, 28975, 28985, 29005, 29045,
    29085, 29045, 29100, 29115, 29115, 29125, 29070, 29070, 29085, 29100, 29230, 29130, 29090, 29055, 29055],
  slow: [[988, 715], [1000, 691], [1013, 664], [1032, 626], [1047, 583], [1067, 533], [1079, 496], [1088, 473], [1103, 443],
    [1115, 421], [1119, 417], [1131, 408], [1140, 404], [1152, 402], [1163, 405], [1175, 413], [1179, 420], [1191, 443],
    [1199, 459], [1207, 485], [1215, 511], [1223, 538], [1231, 555], [1243, 577], [1251, 586], [1260, 586], [1277, 581],
    [1293, 580], [1319, 566], [1323, 560], [1335, 534], [1343, 517], [1357, 486], [1367, 448], [1380, 412], [1395, 375],
    [1403, 359], [1415, 342], [1423, 337], [1440, 331], [1453, 329], [1465, 332], [1473, 333], [1480, 336], [1497, 335],
    [1519, 332], [1530, 331], [1540, 327], [1559, 322], [1571, 314], [1587, 303], [1611, 292], [1623, 284], [1635, 280],
    [1647, 271], [1663, 259], [1679, 249], [1687, 243], [1699, 241]],
  fast: [[967, 647], [983, 616], [991, 597], [1007, 563], [1023, 533], [1035, 512], [1047, 491], [1063, 470], [1079, 453],
    [1093, 447], [1103, 447], [1113, 454], [1131, 464], [1147, 480], [1167, 495], [1195, 523], [1207, 533], [1223, 543],
    [1239, 546], [1251, 545], [1260, 542], [1271, 532], [1293, 502], [1307, 475], [1319, 452], [1331, 432], [1347, 412],
    [1371, 387], [1395, 360], [1407, 348], [1417, 337], [1427, 332], [1435, 327], [1440, 326], [1451, 321], [1483, 321],
    [1497, 319], [1513, 317], [1535, 309], [1553, 297], [1573, 285], [1587, 276], [1603, 268]],
  zero: 871,
  hist: [[0, 46], [4, 56], [8, 65], [10, 68], [13, 68], [16, 67], [18, 70], [20, 71], [23, 66], [26, 59], [29, 49], [32, 33],
    [35, 18], [37, 8], [38.5, 0], [40, -12], [42, -23], [44, -37], [47, -54], [50, -72], [53, -88], [57, -108], [60, -122],
    [63, -129], [64, -130], [67, -127], [70, -116], [73, -101], [75, -87], [78, -61], [81, -36], [84, -11], [85, 0], [86, 8],
    [88, 26], [91, 54], [94, 78], [96, 93], [98, 109], [100, 122], [102, 129], [104, 136], [105, 137], [106.5, 136],
    [108, 131], [110, 123], [112, 116], [114, 105], [116, 93], [117, 85], [119, 70], [122, 47], [125, 25], [127, 7],
    [128, 0], [129, -10], [131, -25], [134, -46], [136, -58], [139, -73], [142, -86], [145, -92], [147, -92], [149, -90],
    [152, -82], [155, -73], [158, -60], [161, -46], [164, -32], [167, -19], [169, -12], [172, -2], [173, 3], [176, 14],
    [178, 20], [181, 29], [183, 35]],
  signal: [[0, -52], [3, -48], [6, -42], [9, -34], [14, -19], [17, -8], [20, 2], [23, 16], [27, 32], [31, 49], [34, 63],
    [37, 72], [40, 81], [43, 87], [46, 89], [49, 89], [51.5, 87], [56, 78], [60, 64], [64, 47], [69, 20], [72.5, 0],
    [78, -32], [81.5, -48], [85, -62], [88, -69], [91, -75], [93, -77], [96, -78], [99, -74], [102, -66], [105, -56],
    [109, -39], [114, -18], [118.2, -1], [122, 16], [125, 27], [128, 35], [131.5, 43], [134, 47], [137.8, 51], [143, 51],
    [148, 46], [152, 40], [156, 32], [161, 22], [165.7, 11], [170, 0], [175, -12], [179, -21], [183, -27]],
  macd: [[0, -7], [3.2, 6], [8, 27], [10, 37], [14, 48], [16, 56], [19, 71], [22, 80], [26, 88], [28, 91], [30, 90], [35, 83],
    [38.5, 75], [42, 62], [46, 40], [50, 18], [52.3, 2], [55, -20], [58, -41], [62, -71], [64, -84], [67, -96], [70, -103],
    [72.3, -105], [74, -104], [77, -96], [81, -82], [84.8, -62], [88, -44], [90, -28], [94, 0], [96, 18], [100, 49],
    [103, 69], [105, 81], [106.5, 86], [108.2, 88], [112.3, 88], [115.7, 82], [118.2, 76], [122, 63], [125, 50], [128, 35],
    [131, 18], [134, 2], [137, -13], [141, -30], [143, -37], [146, -43], [147.5, -45], [149, -45], [151.5, -42],
    [154.8, -39], [157, -34], [161, -23], [164, -17], [167, -13], [172.3, -7], [176, -1], [178, 0], [180, 4], [183, 7]],
  cycles: [991, 1171, 1351, 1531, 1711], cycleTop: 740,
  ellipse: [1691.5, 231.5, 69, 75],
  trend: [1523, 339, 1874, 344]
};

// linear interpolation between [index, value] anchors
function valueAt(points, i) {
  const k = points.findIndex(p => p[0] >= i);
  if (k <= 0) return points[0][1];
  const [x0, y0] = points[k - 1];
  const [x1, y1] = points[k];
  return y0 + (y1 - y0) * (i - x0) / (x1 - x0);
}

function line(x1, y1, x2, y2, color, dash = '') {
  return `<path d="M${x1} ${y1}L${x2} ${y2}" stroke="${color}" stroke-dasharray="${dash}" shape-rendering="crispEdges"/>`;
}

function vline(x, y1, y2, color, dash) {
  return line(x + 0.5, y1, x + 0.5, y2, color, dash);
}

function hline(y, x1, x2, color, dash) {
  return line(x1, y + 0.5, x2, y + 0.5, color, dash);
}

function poly(points, color, width, rendering = 'crispEdges') {
  return `<polyline points="${points.map(p => p.join(',')).join(' ')}" fill="none" stroke="${color}" stroke-width="${width}" stroke-linejoin="round" shape-rendering="${rendering}"/>`;
}

function text(x, y, cls, value) {
  return `<text x="${x}" y="${y}" class="${cls}">${value}</text>`;
}

function legend(y, parts) {
  return `<text y="${y}" class="legend">${parts.map(([x, t, c]) => `<tspan x="${x}" fill="${c}">${t}</tspan>`).join('')}</text>`;
}

function tag(c, [y, h, color, label]) {
  return `<rect x="${c.axis + 1}" y="${y}" width="${c.right - c.axis - 1}" height="${h}" fill="${color}"/>` +
    (label ? text(c.axis + 9, y + 19, 'tag-label', label) : '');
}

function drawChart(c) {
  const out = [];
  const xAt = i => c.first + i * c.step;
  const last = xAt(c.price.length - 1);

  // MACD histogram
  for (let i = 0; i < c.price.length; i++) {
    const v = valueAt(c.hist, i);
    out.push(`<rect x="${xAt(i) - 1}" y="${Math.round(c.zero - Math.max(v, 0))}" width="2" height="${Math.round(Math.abs(v))}" fill="#2c2c2c"/>`);
  }

  for (let i = 0; i < c.gridCount; i++) {
    const x = c.gridFirst + i * c.gridStep;
    out.push(vline(x, c.gridTop, c.gridEnd, '#4c4c4c', '9 3 3 3 3 3'));
    out.push(vline(x, c.macdTop, c.bottom, '#4c4c4c', '9 3 3 3 3 3'));
  }
  c.cycles.forEach(x => out.push(vline(x, c.cycleTop, c.bottom - 1, '#006464', '18 6')));

  c.levels.forEach(([y, x, ty, label]) => {
    out.push(hline(y, c.left, c.axis - 4, '#800080', '3 3'));
    out.push(text(x, ty, 'level-label', label));
  });
  out.push(hline(c.zero, c.left + 1, last + 2, OLIVE, '2 2'));

  // price and its averages
  out.push(poly(c.slow, '#0000ff', 2, 'auto'));
  out.push(poly(c.price.map((p, i) => [xAt(i) + 0.5, Math.round(c.priceY(p)) + 0.5]), BLUE, 1));
  const dots = c.price.map((p, i) => {
    const x = xAt(i);
    const y = Math.round(c.priceY(p));
    return `M${x - 1} ${y - 2}h3v4h-3zM${x - 2} ${y - 1}h1v2h-1z`;
  });
  out.push(`<path d="${dots.join('')}" fill="${CYAN}"/>`);
  out.push(poly(c.fast, YELLOW, 1));

  const toScreen = ([i, v]) => [xAt(i) + 0.5, c.zero + 0.5 - v];
  out.push(poly(c.macd.map(toScreen), RED, 1));
  out.push(poly(c.signal.map(toScreen), YELLOW, 1));

  // axes
  out.push(vline(c.axis, c.top, c.bottom, WHITE));
  out.push(hline(c.split, c.axis - 1, c.right, WHITE));
  out.push(hline(c.bottom, c.left, c.right, WHITE));
  c.ticks.forEach(p => out.push(hline(Math.round(c.priceY(p)), c.axis, c.axis + 7, WHITE)));
  c.labels.forEach(p => out.push(text(c.axis + 8, Math.round(c.priceY(p)) + 7, 'axis-label', p)));
  c.macdTicks.forEach(y => out.push(hline(y, c.axis, c.axis + 7, WHITE)));
  c.macdLabels.forEach(([y, t]) => out.push(text(c.axis + 8, y + 7, 'axis-label', t)));
  c.tags.forEach(t => out.push(tag(c, t)));
  c.macdTags.forEach(t => out.push(tag(c, t)));

  c.dateTicks.forEach(x => out.push(vline(x, c.bottom, c.bottom + 5, WHITE)));
  out.push(vline(c.yearTick, c.bottom, c.bottom + 11, WHITE));
  c.dates.forEach(([x, t]) => out.push(text(x, c.dateY, 'axis-label', t)));

  out.push(legend(c.legendY, c.legend));
  out.push(legend(c.macdLegendY, c.macdLegend));

  // hand drawn marks
  const [cx, cy, rx, ry] = c.ellipse;
  out.push(`<ellipse cx="${cx}" cy="${cy}" rx="${rx}" ry="${ry}" fill="none" stroke="${YELLOW}" stroke-width="3" shape-rendering="crispEdges"/>`);
  const [x1, y1, x2, y2] = c.trend;
  out.push(poly([[x1, y1], [x2, y2]], YELLOW, 3));
  if (c.marker) out.push(`<rect x="${c.marker[0]}" y="${c.marker[1]}" width="7" height="7" fill="${WHITE}"/>`);

  document.getElementById(c.id).innerHTML = out.join('');
}

function slant(i) {
  // the active tab lies over both of its neighbours
  if (i === ACTIVE_TAB + 1) {
    return '<svg class="slant" viewBox="0 0 10 16"><path d="M0 0h7L2 16H0z" fill="#fff"/><path d="M7.500 0L2.500 15.500H10" fill="none" stroke="#000"/></svg>';
  }
  if (i === TABS.length) {
    return '<svg class="slant" viewBox="0 0 10 16"><path d="M0 15.500h2L8 0" fill="none" stroke="#000"/></svg>';
  }
  const fill = i === ACTIVE_TAB ? '#fff' : 'none';
  const left = i === 0 ? '' : 'M0 15.500L4 8';
  return `<svg class="slant" viewBox="0 0 10 16"><path d="M2 0h8v16H7z" fill="${fill}"/><path d="M1.500 0L6.500 15.500H10${left}" fill="none" stroke="#000"/></svg>`;
}

function drawTabs() {
  const tabs = TABS.map((name, i) => `${slant(i)}<button class="tab${i === ACTIVE_TAB ? ' active' : ''}">${name}</button>`);
  document.getElementById('tab-bar').insertAdjacentHTML('beforeend', tabs.join('') + slant(TABS.length));
}

drawChart(stoxx);
drawChart(mib);
drawTabs();
```
